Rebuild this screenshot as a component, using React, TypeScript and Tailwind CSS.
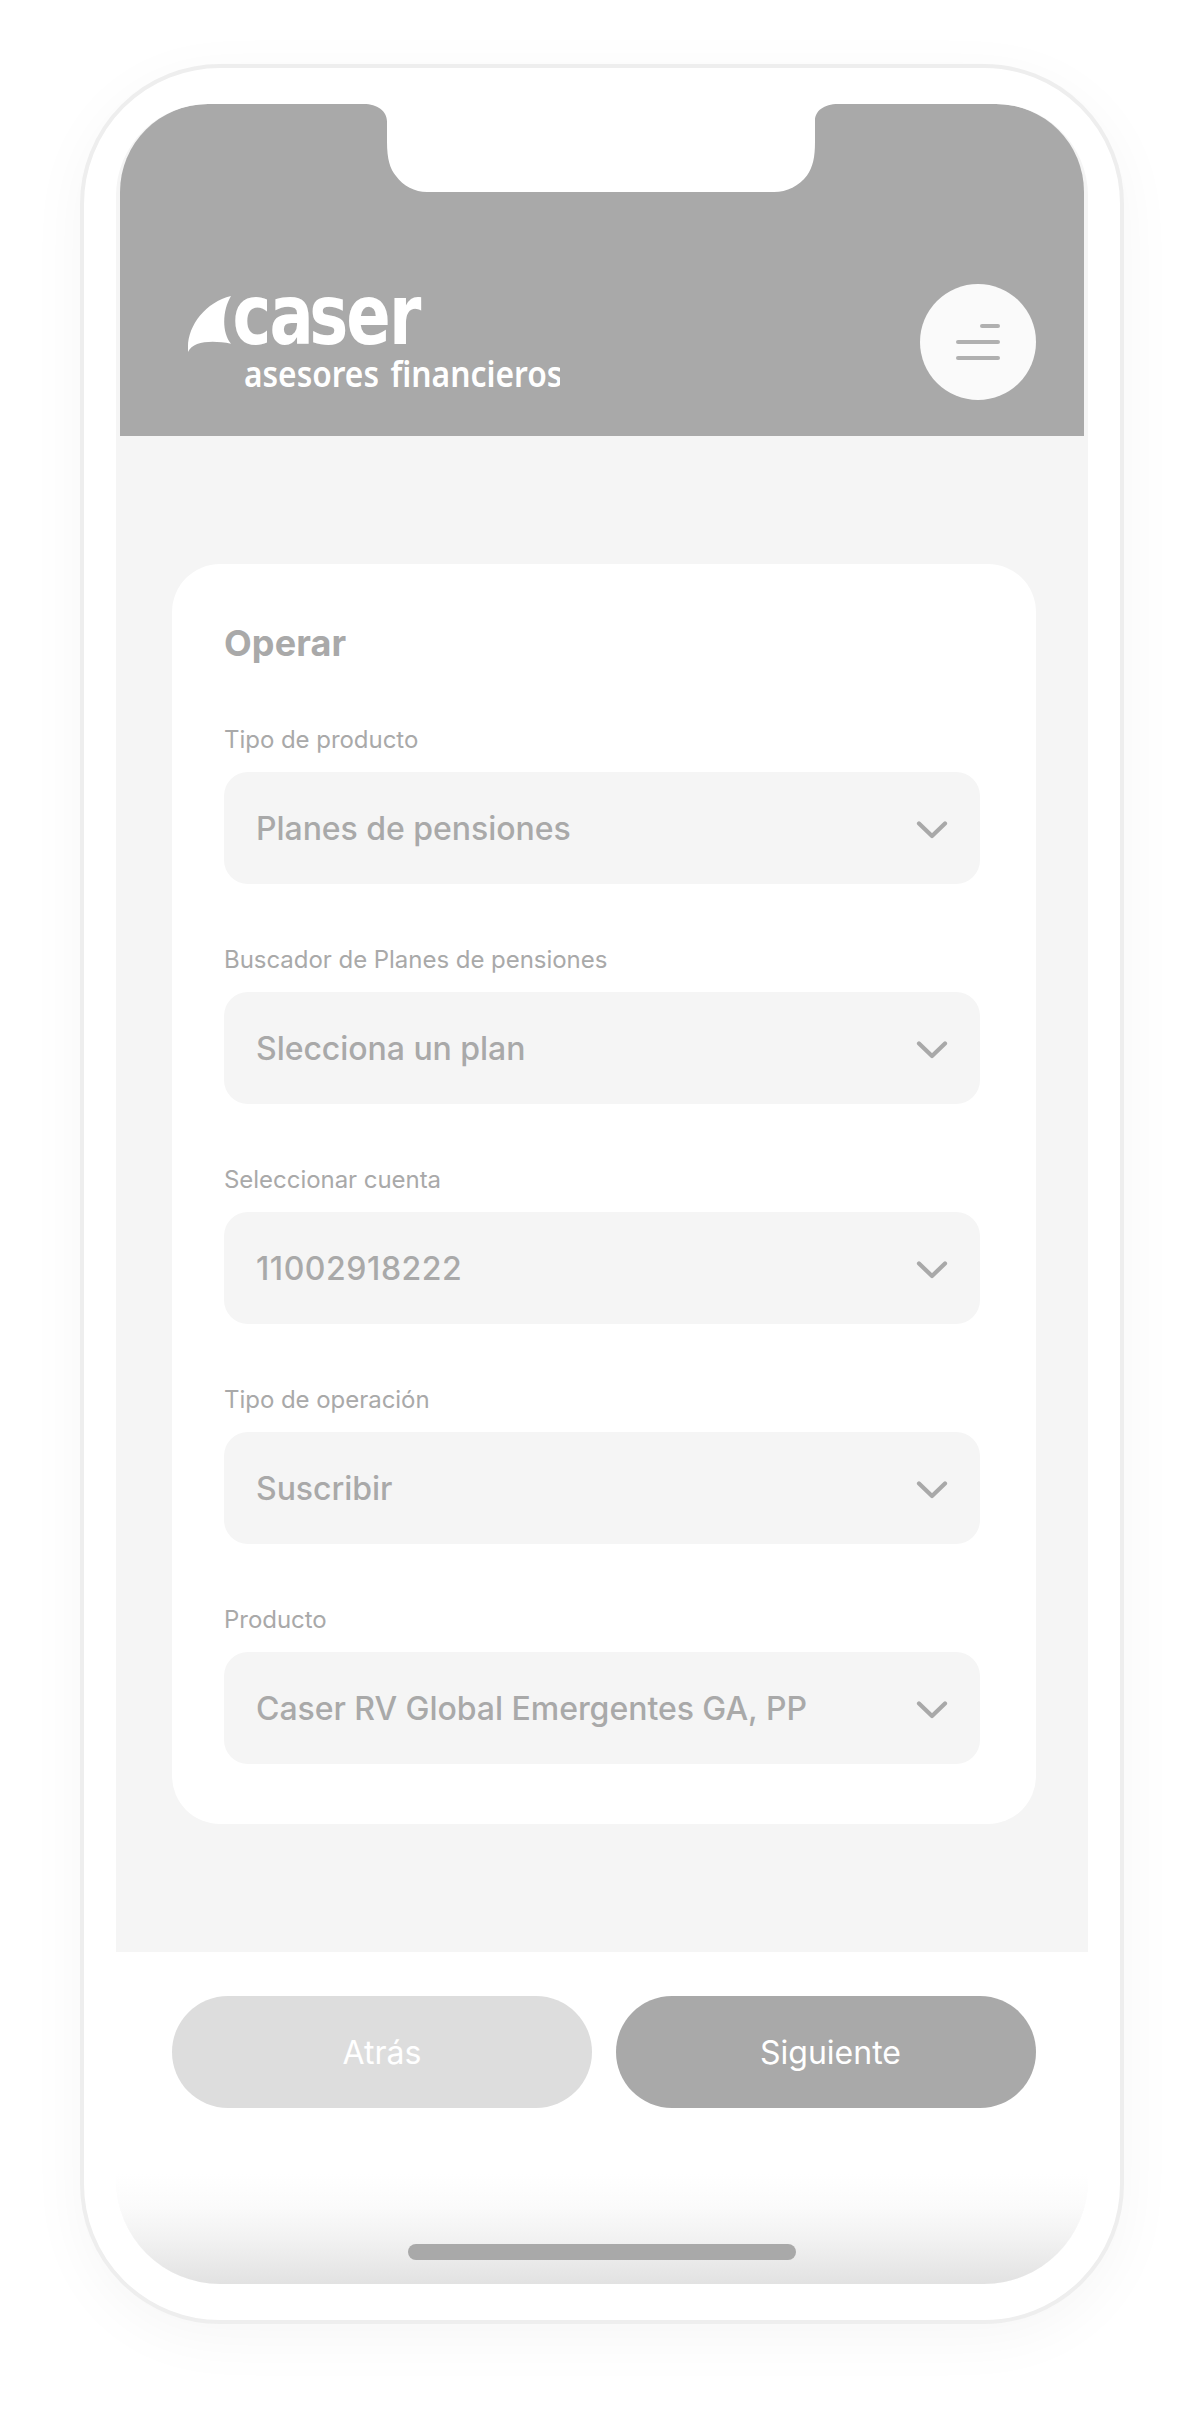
const fields = [
  { label: "Tipo de producto", value: "Planes de pensiones" },
  { label: "Buscador de Planes de pensiones", value: "Slecciona un plan" },
  { label: "Seleccionar cuenta", value: "11002918222", numeric: true },
  { label: "Tipo de operación", value: "Suscribir" },
  { label: "Producto", value: "Caser RV Global Emergentes GA, PP" },
];

function Logo() {
  return (
    <svg className="mt-[20px] ml-[68px] h-[100px] w-[372px]" viewBox="188 290 372 100" aria-label="caser asesores financieros">
      <path
        d="M231 296C206 302 188 325 188 347V352C193 341 212 340 231 343.700C222 333 222 311 231 296Z"
        fill="#fff"
      />
      <text
        className="font-['DejaVu_Sans',sans-serif]"
        fill="#fff"
        transform="scale(0.79 1)"
        x="294.3 341.1 391.5 438.3 492.5"
        y="344.5"
        fontSize="83"
        fontWeight="700"
      >
        caser
      </text>
      <g fill="#fff" className="font-['Noto_Sans',sans-serif]" fontSize="35.500" fontWeight="600">
        <text x="244" y="386.500" textLength="135" lengthAdjust="spacingAndGlyphs">
          asesores
        </text>
        <text x="390.500" y="386.500" textLength="172" lengthAdjust="spacingAndGlyphs">
          ﬁnancieros
        </text>
      </g>
    </svg>
  );
}

function Header() {
  return (
    <header className="relative mx-1 flex h-[332px] shrink-0 justify-between rounded-t-[88px] bg-[#a9a9a9] pt-[166px]">
      {/* Sensor notch hanging from the top edge */}
      <svg className="absolute top-0 left-[240px] h-[88px] w-[484px]" viewBox="360 104 484 88">
        <path
          d="M360 103.500V104H364C377 104 387 111 387 121.500V142C387 159 390 169 396 176C403 186 415 192 427 192H774C787 192 799 186 807 175.500C813 167 815 157 815 142V120.500C815 111 824 104 838 104V103.500Z"
          fill="#fff"
        />
      </svg>
      <Logo />
      <button
        aria-label="Menú"
        className="mt-[14px] mr-12 flex size-[116px] flex-col items-end gap-3 rounded-full bg-[#fafafa] pt-10 pr-9"
      >
        <span className="h-1 w-5 rounded-full bg-[#b0b0b0]" />
        <span className="h-1 w-11 rounded-full bg-[#b0b0b0]" />
        <span className="h-1 w-11 rounded-full bg-[#b0b0b0]" />
      </button>
    </header>
  );
}

function SelectField({ label, value, numeric }: { label: string; value: string; numeric?: boolean }) {
  return (
    <div>
      <div className="mb-4 pt-px text-[24px] leading-8 tracking-[-0.04px]">{label}</div>
      <button className="flex h-28 w-full items-center justify-between rounded-3xl bg-[#f5f5f5] pr-8 pl-8 text-[32px] font-medium">
        <span className={numeric ? "pt-0.5 tracking-[0.55px]" : "pt-0.5 tracking-[-0.04px]"}>{value}</span>
        <svg className="mt-[3px] h-[18px] w-8" viewBox="0 0 32 18" fill="none">
          <path d="M3 2.5L16 15L29 2.5" stroke="#a9a9a9" strokeWidth="4.200" strokeLinecap="round" strokeLinejoin="round" />
        </svg>
      </button>
    </div>
  );
}

export default function App() {
  return (
    <div className="h-[2420px] w-[1204px] overflow-hidden bg-white pt-16 pl-20 font-['Inter',sans-serif] text-[#a9a9a9]">
      <div className="h-[2260px] w-[1044px] rounded-[140px] border-4 border-[#eee] bg-white px-8 py-9 shadow-[0_14px_60px_rgba(0,0,0,0.04)]">
        <div className="flex h-[2180px] flex-col overflow-hidden rounded-t-[92px] rounded-b-[104px] bg-[#f5f5f5]">
          <Header />
          <main className="h-[1516px] shrink-0 pt-32 pr-[52px] pl-14">
            <section className="h-[1260px] rounded-[48px] bg-white px-[52px] pt-[57px]">
              <h1 className="mb-[58px] text-[36px] leading-[44px] font-bold tracking-[0.1px]">Operar</h1>
              <div className="mr-1 flex flex-col gap-[59px]">
                {fields.map((field) => (
                  <SelectField key={field.label} {...field} />
                ))}
              </div>
            </section>
          </main>
          <footer className="flex flex-1 flex-col bg-white">
            <div className="flex h-[212px] shrink-0 gap-6 pt-11 pr-[52px] pl-14 text-[32px] text-white">
              <button className="h-28 w-[420px] rounded-full bg-[#ddd] pt-0.5">Atrás</button>
              <button className="h-28 w-[420px] rounded-full bg-[#a9a9a9] pt-0.5 pl-[9px]">Siguiente</button>
            </div>
            <div className="flex flex-1 items-end justify-center bg-[linear-gradient(180deg,#fff_8%,#fbfbfb_35%,#f2f2f2_62%,#e2e2e2_100%)] pb-6">
              <div className="h-4 w-[388px] rounded-full bg-[#a9a9a9]" />
            </div>
          </footer>
        </div>
      </div>
    </div>
  );
}
